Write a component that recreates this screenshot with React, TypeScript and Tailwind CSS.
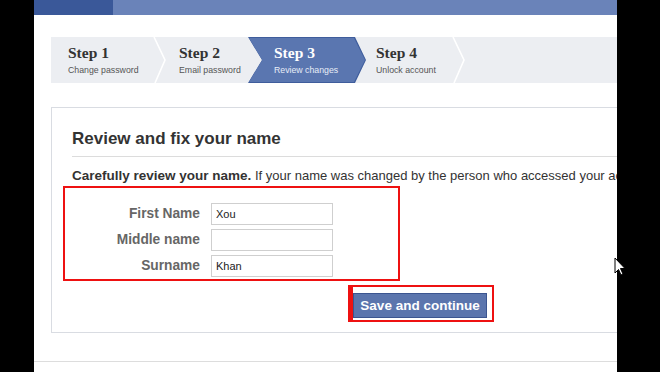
const Separator = () => (
  <svg width="13" height="46" viewBox="0 0 13 46" fill="none" className="shrink-0">
    <polyline points="1,0 12,23 2,46" stroke="#ffffff" strokeWidth="1.6" />
  </svg>
);

const Step = ({ title, sub, className }: { title: string; sub: string; className: string }) => (
  <div className={`flex flex-col justify-center shrink-0 h-full ${className}`}>
    <div className="font-['Liberation_Serif'] font-bold text-[15.5px] leading-[18px] text-[#333]">{title}</div>
    <div className="text-[8.75px] leading-[13px] mt-[2px] text-[#555]">{sub}</div>
  </div>
);

const Field = ({ label, value }: { label: string; value: string }) => (
  <div className="flex items-center h-[22px]">
    <div className="w-[135px] text-right text-[13.75px] font-bold text-[#666]">{label}</div>
    <div className="ml-[11px] w-[122px] h-[22px] border border-[#cfcfcf] bg-white px-[4px] flex items-center text-[11px] text-[#222]">
      {value}
    </div>
  </div>
);

export default function App() {
  return (
    <div className="relative w-[660px] h-[372px] flex bg-black font-['Liberation_Sans',Arial,sans-serif] overflow-hidden">
      <div className="w-[34px] shrink-0 bg-black" />
      <div className="w-[583px] shrink-0 bg-white overflow-hidden flex flex-col">
        {/* top bar */}
        <div className="flex h-[15px] shrink-0">
          <div className="w-[79px] bg-[#3a5899]" />
          <div className="flex-1 bg-[#6a83b9]" />
        </div>

        {/* steps */}
        <div className="mt-[22px] ml-[17px] h-[46px] bg-[#eceef2] flex items-stretch shrink-0">
          <Step title="Step 1" sub="Change password" className="w-[102px] pl-[17px]" />
          <Separator />
          <Step title="Step 2" sub="Email password" className="w-[82px] pl-[13px]" />
          <div className="w-[118px] shrink-0 h-full bg-[#3f5d9c] [clip-path:polygon(0_0,107px_0,118px_50%,107px_100%,0_100%,14px_50%)] flex">
            <div className="m-[1px] flex-1 bg-[#5a76b0] [clip-path:polygon(0_0,105px_0,116px_50%,105px_100%,0_100%,13px_50%)] flex flex-col justify-center pl-[25px]">
              <div className="font-['Liberation_Serif'] font-bold text-[15.5px] leading-[18px] text-white">Step 3</div>
              <div className="text-[8.75px] leading-[13px] mt-[2px] text-[#e8edf7]">Review changes</div>
            </div>
          </div>
          <Step title="Step 4" sub="Unlock account" className="w-[86px] pl-[10px]" />
          <Separator />
          <div className="flex-1" />
        </div>

        {/* panel */}
        <div className="mt-[24px] ml-[17px] w-[600px] border border-[#d9dce2] pt-[21px] pl-[20px] pb-[10px] shrink-0">
          <div className="border-b border-[#dcdcdc] pb-[7px]">
            <div className="text-[17px] leading-[20px] font-bold text-[#333]">Review and fix your name</div>
          </div>
          <div className="mt-[11px] text-[13px] leading-[16px] text-[#333] whitespace-nowrap">
            <span className="font-bold text-[13.5px]">Carefully review your name.</span> If your name was changed by the person who accessed your account
          </div>
          <div className="mt-[2px] -ml-[9px] w-[337px] border-2 border-[#ee1111] pt-[15px] pb-[2px] flex flex-col gap-[4px]">
            <Field label="First Name" value="Xou" />
            <Field label="Middle name" value="" />
            <Field label="Surname" value="Khan" />
          </div>
          <div className="mt-[4px] ml-[276px] w-[146px] border-2 border-l-[5px] border-[#ee1111] pt-[6px] pr-[5px] pb-[2px]">
            <button className="w-[134px] h-[25px] bg-[#5b75ad] border border-[#3b5590] text-white font-bold text-[13.5px] leading-[23px]">
              Save and continue
            </button>
          </div>
        </div>

        <div className="mt-[28px] border-t border-[#dddddd]" />
      </div>
      <div className="flex-1 bg-black" />

      {/* mouse cursor */}
      <svg className="absolute left-[614px] top-[257px]" width="12" height="19" viewBox="0 0 12 19">
        <path d="M1 1 L1 16 L4.5 12.5 L7 18 L9 17 L6.5 11.5 L11 11.5 Z" fill="#ffffff" stroke="#000000" strokeWidth="1" />
      </svg>
    </div>
  );
}
